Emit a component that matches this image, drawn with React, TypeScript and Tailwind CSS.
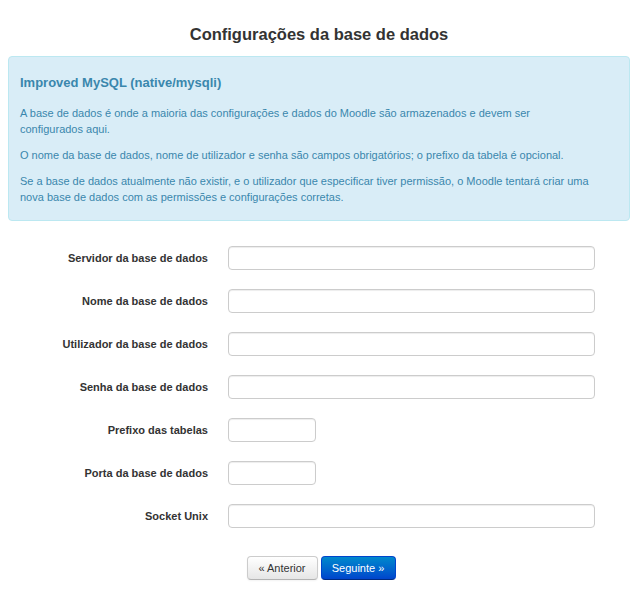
import React from "react";

const fields = [
  { label: "Servidor da base de dados", short: false },
  { label: "Nome da base de dados", short: false },
  { label: "Utilizador da base de dados", short: false },
  { label: "Senha da base de dados", short: false },
  { label: "Prefixo das tabelas", short: true },
  { label: "Porta da base de dados", short: true },
  { label: "Socket Unix", short: false },
];

export default function App() {
  return (
    <div className="min-h-[599px] bg-white px-2 text-[#333] [font-family:'Liberation_Sans',Arial,sans-serif]">
      <h2 className="pt-[25px] text-center text-[16.5px] font-bold leading-[18px] text-[#333]">
        Configurações da base de dados
      </h2>

      <div className="mt-[13px] rounded-[4px] border border-[#bce8f1] bg-[#d9edf7] pt-[17px] pr-[35px] pb-[15px] pl-[11px] text-[#3a87ad]">
        <h3 className="mb-[13px] text-[13px] font-bold leading-[18px]">
          Improved MySQL (native/mysqli)
        </h3>
        <p className="mb-[10px] text-[11px] leading-[16px]">
          A base de dados é onde a maioria das configurações e dados do Moodle são armazenados e devem ser
          configurados aqui.
        </p>
        <p className="mb-[10px] text-[11px] leading-[16px]">
          O nome da base de dados, nome de utilizador e senha são campos obrigatórios; o prefixo da tabela é opcional.
        </p>
        <p className="text-[11px] leading-[16px]">
          Se a base de dados atualmente não existir, e o utilizador que especificar tiver permissão, o Moodle tentará
          criar uma nova base de dados com as permissões e configurações corretas.
        </p>
      </div>

      <form className="mt-[25px] flex flex-col gap-[19px]">
        {fields.map((f) => (
          <div key={f.label} className="flex items-center">
            <label className="w-[200px] shrink-0 text-right text-[11px] font-bold leading-[16px] text-[#333]">
              {f.label}
            </label>
            <input
              type="text"
              className={`ml-[20px] h-[24px] rounded-[4px] border border-[#ccc] bg-white shadow-[inset_0_1px_1px_rgba(0,0,0,0.075)] ${
                f.short ? "w-[88px]" : "w-[367px]"
              }`}
            />
          </div>
        ))}
      </form>

      <div className="mt-[28px] flex justify-center gap-[3px] pl-[4px]">
        <button className="h-[24px] w-[71px] rounded-[4px] border border-[#ccc] border-b-[#b3b3b3] bg-gradient-to-b from-white to-[#e6e6e6] text-[11px] text-[#333] shadow-[inset_0_1px_0_rgba(255,255,255,0.2),0_1px_2px_rgba(0,0,0,0.05)]">
          « Anterior
        </button>
        <button className="h-[24px] w-[75px] rounded-[4px] border border-[#0044cc] border-b-[#002a80] bg-gradient-to-b from-[#0088cc] to-[#0044cc] text-[11px] text-white">
          Seguinte »
        </button>
      </div>
    </div>
  );
}
